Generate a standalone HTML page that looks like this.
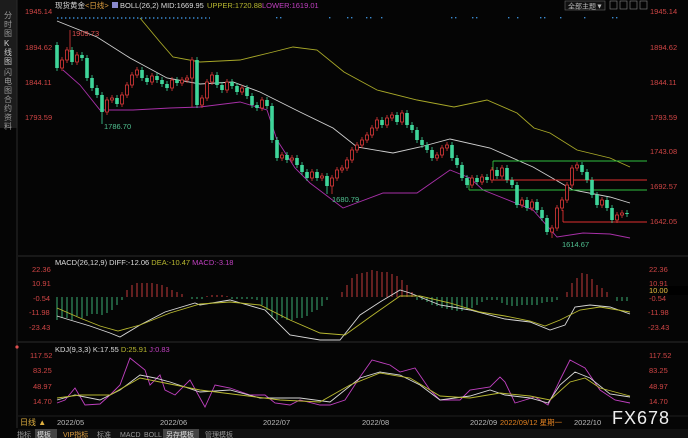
<!DOCTYPE html>
<html><head><meta charset="utf-8"><style>
body{margin:0;background:#000;width:688px;height:438px;overflow:hidden;font-family:"Liberation Sans","Noto Sans CJK SC",sans-serif}
svg{display:block}
</style></head><body>
<svg width="688" height="438" xmlns="http://www.w3.org/2000/svg" font-family="Liberation Sans, Noto Sans CJK SC, sans-serif">
<rect width="688" height="438" fill="#050505"/>
<rect x="0" y="0" width="17" height="128" fill="#1c1c1c"/>
<line x1="17" y1="0" x2="17" y2="428" stroke="#2a2a2a"/>
<g fill="#999" font-size="8">
<text x="4" y="18">分</text><text x="4" y="27">时</text><text x="4" y="36">图</text>
<text x="4" y="46" fill="#ccc">K</text><text x="4" y="55" fill="#ccc">线</text><text x="4" y="64" fill="#ccc">图</text>
<text x="4" y="75">闪</text><text x="4" y="84">电</text><text x="4" y="93">图</text>
<text x="4" y="102">合</text><text x="4" y="111">约</text><text x="4" y="120">资</text><text x="4" y="129">料</text>
</g>
<line x1="18" y1="256" x2="688" y2="256" stroke="#2a2a2a"/>
<line x1="18" y1="342" x2="688" y2="342" stroke="#2a2a2a"/>
<line x1="18" y1="416" x2="688" y2="416" stroke="#1e1e1e"/>
<text x="55" y="8" font-size="7.5" fill="#ddd">现货黄金<tspan fill="#e0a040">&lt;日线&gt;</tspan></text>
<rect x="112" y="2" width="6" height="6" fill="#8888cc"/>
<text x="120" y="8" font-size="7.5" fill="#ddd">BOLL(26,2) MID:1669.95</text>
<text x="207" y="8" font-size="7.5" fill="#b8b830">UPPER:1720.88</text>
<text x="262" y="8" font-size="7.5" fill="#c040c0">LOWER:1619.01</text>
<rect x="565" y="1" width="40" height="9" fill="#111" stroke="#666" stroke-width="0.6"/>
<text x="568" y="8.5" font-size="7" fill="#bbb">全部主题▼</text>
<g fill="none" stroke="#888" stroke-width="0.6"><rect x="610" y="1" width="7" height="8"/><rect x="620" y="1" width="7" height="8"/><rect x="630" y="1" width="7" height="8"/><rect x="640" y="1" width="7" height="8"/></g>
<g font-size="7.5" fill="#d04545">
<text x="25" y="14">1945.14</text><text x="25" y="50">1894.62</text><text x="25" y="85">1844.11</text><text x="25" y="120">1793.59</text>
<text x="650" y="14">1945.14</text><text x="650" y="50">1894.62</text><text x="650" y="85">1844.11</text><text x="650" y="120">1793.59</text><text x="650" y="154">1743.08</text><text x="650" y="189">1692.57</text><text x="650" y="224">1642.05</text>
<text x="32" y="272">22.36</text><text x="32" y="286">10.91</text><text x="33" y="301">-0.54</text><text x="29" y="315">-11.98</text><text x="29" y="330">-23.43</text>
<text x="649" y="272">22.36</text><text x="649" y="286">10.91</text><text x="649" y="301">-0.54</text><text x="648" y="315">-11.98</text><text x="648" y="330">-23.43</text>
<text x="30" y="358">117.52</text><text x="33" y="373">83.25</text><text x="33" y="389">48.97</text><text x="33" y="404">14.70</text>
<text x="649" y="358">117.52</text><text x="649" y="373">83.25</text><text x="649" y="389">48.97</text><text x="649" y="404">14.70</text>
</g>
<rect x="668" y="286" width="20" height="9" fill="#000"/>
<text x="649" y="293" font-size="7.5" fill="#e8c040">10.00</text>
<circle cx="17" cy="347" r="1.6" fill="#e05050"/>
<text x="55" y="265" font-size="7.5" fill="#ddd">MACD(26,12,9) DIFF:-12.06 <tspan fill="#b8b830">DEA:-10.47</tspan> <tspan fill="#c040c0">MACD:-3.18</tspan></text>
<text x="55" y="352" font-size="7.5" fill="#ddd">KDJ(9,3,3) K:17.55 <tspan fill="#b8b830">D:25.91</tspan> <tspan fill="#c040c0">J:0.83</tspan></text>
<!-- dots -->
<line x1="57" y1="18" x2="210" y2="18" stroke="#3a8ad0" stroke-width="1.4" stroke-dasharray="1.4 2.6"/>
<path fill="#3a8ad0" d="M276 17h1.4v1.4h-1.4zM280 17h1.4v1.4h-1.4zM329 17h1.4v1.4h-1.4zM347 17h1.4v1.4h-1.4zM351 17h1.4v1.4h-1.4zM366 17h1.4v1.4h-1.4zM370 17h1.4v1.4h-1.4zM381 17h1.4v1.4h-1.4zM451 17h1.4v1.4h-1.4zM455 17h1.4v1.4h-1.4zM472 17h1.4v1.4h-1.4zM476 17h1.4v1.4h-1.4zM508 17h1.4v1.4h-1.4zM517 17h1.4v1.4h-1.4zM540 17h1.4v1.4h-1.4zM544 17h1.4v1.4h-1.4zM560 17h1.4v1.4h-1.4zM584 17h1.4v1.4h-1.4zM612 17h1.4v1.4h-1.4zM616 17h1.4v1.4h-1.4z"/>
<!-- bands -->
<g fill="none" stroke-width="0.9">
<polyline stroke="#a8a828" points="140,18 160,42 173,57 200,62 240,60 273,52 293,47 317,50 344,72 377,90 417,100 454,107 487,100 517,113 534,128 550,133 577,150 610,158 630,167"/>
<polyline stroke="#d0d0d0" points="57,21 97,37 130,58 167,78 200,84 233,82 260,92 300,112 333,128 357,147 393,153 420,147 450,139 490,148 533,167 573,190 610,197 630,203"/>
<polyline stroke="#a830a8" points="63,70 80,85 100,110 133,110 170,108 200,107 240,102 267,110 277,140 295,168 310,183 343,208 383,193 417,193 450,170 470,178 483,190 533,210 557,237 583,233 610,234 630,238"/>
<line stroke="#30c040" x1="493" y1="161" x2="647" y2="161"/>
<line stroke="#30c040" x1="469" y1="190" x2="647" y2="190"/>
<line stroke="#30c040" x1="469" y1="190" x2="469" y2="180"/>
<line stroke="#30c040" x1="493" y1="161" x2="493" y2="180"/>
<line stroke="#e03030" x1="493" y1="180" x2="647" y2="180"/>
<line stroke="#e03030" x1="563" y1="222" x2="647" y2="222"/>
<line stroke="#e03030" x1="563" y1="222" x2="563" y2="210"/>
</g>
<!-- wicks -->
<g stroke-width="0.8" fill="none">
<path stroke="#3fd59a" d="M57 42v29M72 47v18M82 52v9M87 55v26M92 75v16M97 85v13M102 92v32M117 95v12M142 67v14M147 75v10M157 73v10M162 77v10M167 81v10M177 77v9M197 57v51M217 72v16M222 82v11M232 79v10M237 83v12M247 85v14M252 93v15M257 102v9M267 97v12M272 103v40M277 137v24M287 152v11M297 155v13M302 162v13M307 169v12M317 169v12M327 173v21M382 117v11M397 112v13M407 110v18M412 122v11M417 127v16M422 137v11M427 142v11M432 147v14M452 142v19M457 155v13M462 162v19M467 175v13M477 175v10M487 174v9M497 167v12M507 165v18M512 177v11M517 182v26M527 197v14M537 199v14M542 207v14M547 215v20M582 162v13M587 169v14M592 177v21M597 192v16M607 197v14M612 205v18M627 210v7"/>
<path stroke="#e03a3a" d="M62 57v14M67 47v16M70 30v22M77 52v13M107 97v18M112 95v8M122 92v15M127 82v16M132 72v16M137 67v11M152 73v12M172 77v14M182 77v9M187 75v8M192 57v50M202 95v13M207 79v22M212 72v13M227 79v14M242 85v10M262 97v14M282 152v9M292 155v8M312 169v12M322 173v8M332 175v19M337 167v14M342 165v8M347 157v14M352 147v16M357 142v11M362 137v11M367 132v11M372 125v13M377 117v14M387 115v13M392 112v9M402 110v15M437 152v9M442 145v13M447 142v9M472 175v13M482 174v11M492 167v16M502 165v14M522 197v11M532 199v12M552 225v13M557 205v26M562 197v14M567 182v21M572 165v23M577 162v9M602 197v11M617 212v11M622 210v8"/>
</g>
<path fill="#3fd59a" d="M55.2 45h3.6v23h-3.6zM70.2 50h3.6v12h-3.6zM80.2 55h3.6v3h-3.6zM85.2 58h3.6v20h-3.6zM90.2 78h3.6v10h-3.6zM95.2 88h3.6v7h-3.6zM100.2 95h3.6v17h-3.6zM115.2 98h3.6v6h-3.6zM140.2 70h3.6v8h-3.6zM145.2 78h3.6v4h-3.6zM155.2 76h3.6v4h-3.6zM160.2 80h3.6v4h-3.6zM165.2 84h3.6v4h-3.6zM175.2 80h3.6v3h-3.6zM195.2 60h3.6v45h-3.6zM215.2 75h3.6v10h-3.6zM220.2 85h3.6v5h-3.6zM230.2 82h3.6v4h-3.6zM235.2 86h3.6v6h-3.6zM245.2 88h3.6v8h-3.6zM250.2 96h3.6v9h-3.6zM255.2 105h3.6v3h-3.6zM265.2 100h3.6v6h-3.6zM270.2 106h3.6v34h-3.6zM275.2 140h3.6v18h-3.6zM285.2 155h3.6v5h-3.6zM295.2 158h3.6v7h-3.6zM300.2 165h3.6v7h-3.6zM305.2 172h3.6v6h-3.6zM315.2 172h3.6v6h-3.6zM325.2 176h3.6v10h-3.6zM380.2 120h3.6v5h-3.6zM395.2 115h3.6v7h-3.6zM405.2 113h3.6v12h-3.6zM410.2 125h3.6v5h-3.6zM415.2 130h3.6v10h-3.6zM420.2 140h3.6v5h-3.6zM425.2 145h3.6v5h-3.6zM430.2 150h3.6v8h-3.6zM450.2 145h3.6v13h-3.6zM455.2 158h3.6v7h-3.6zM460.2 165h3.6v13h-3.6zM465.2 178h3.6v7h-3.6zM475.2 178h3.6v4h-3.6zM485.2 177h3.6v3h-3.6zM495.2 170h3.6v6h-3.6zM505.2 168h3.6v12h-3.6zM510.2 180h3.6v5h-3.6zM515.2 185h3.6v20h-3.6zM525.2 200h3.6v8h-3.6zM535.2 202h3.6v8h-3.6zM540.2 210h3.6v8h-3.6zM545.2 218h3.6v14h-3.6zM580.2 165h3.6v7h-3.6zM585.2 172h3.6v8h-3.6zM590.2 180h3.6v15h-3.6zM595.2 195h3.6v10h-3.6zM605.2 200h3.6v8h-3.6zM610.2 208h3.6v12h-3.6zM625.2 213h3.6v1h-3.6z"/>
<path fill="#050505" stroke="#e03a3a" stroke-width="0.8" d="M60.5 60h3v8h-3zM65.5 50h3v10h-3zM75.5 55h3v7h-3zM105.5 100h3v12h-3zM110.5 98h3v2h-3zM120.5 95h3v9h-3zM125.5 85h3v10h-3zM130.5 75h3v10h-3zM135.5 70h3v5h-3zM150.5 76h3v6h-3zM170.5 80h3v8h-3zM180.5 80h3v3h-3zM185.5 78h3v2h-3zM190.5 60h3v18h-3zM200.5 98h3v7h-3zM205.5 82h3v16h-3zM210.5 75h3v7h-3zM225.5 82h3v8h-3zM240.5 88h3v4h-3zM260.5 100h3v8h-3zM280.5 155h3v3h-3zM290.5 158h3v2h-3zM310.5 172h3v6h-3zM320.5 176h3v2h-3zM330.5 178h3v8h-3zM335.5 170h3v8h-3zM340.5 168h3v2h-3zM345.5 160h3v8h-3zM350.5 150h3v10h-3zM355.5 145h3v5h-3zM360.5 140h3v5h-3zM365.5 135h3v5h-3zM370.5 128h3v7h-3zM375.5 120h3v8h-3zM385.5 118h3v7h-3zM390.5 115h3v3h-3zM400.5 113h3v9h-3zM435.5 155h3v3h-3zM440.5 148h3v7h-3zM445.5 145h3v3h-3zM470.5 178h3v7h-3zM480.5 177h3v5h-3zM490.5 170h3v10h-3zM500.5 168h3v8h-3zM520.5 200h3v5h-3zM530.5 202h3v6h-3zM550.5 228h3v4h-3zM555.5 208h3v20h-3zM560.5 200h3v8h-3zM565.5 185h3v15h-3zM570.5 168h3v17h-3zM575.5 165h3v3h-3zM600.5 200h3v5h-3zM615.5 215h3v5h-3zM620.5 213h3v2h-3z"/>
<g font-size="7.5">
<text x="72" y="36" fill="#e05050">1909.73</text>
<text x="104" y="129" fill="#50c090">1786.70</text>
<text x="332" y="202" fill="#50c090">1680.79</text>
<text x="562" y="247" fill="#50c090">1614.67</text>
</g>
<!-- MACD hist -->
<path stroke="#40c080" stroke-width="0.9" fill="none" d="M57 297V320M62 297V318M67 297V318M72 297V320M77 297V316M82 297V318M87 297V316M92 297V314M97 297V314M102 297V315M107 297V313M112 297V310M117 297V305M122 297V300M192 297V299M197 297V299M202 297V299M232 297V299M237 297V299M242 297V299M247 297V299M252 297V299M257 297V300M262 297V305M267 297V310M272 297V318M277 297V320M282 297V318M287 297V320M292 297V320M297 297V318M302 297V318M307 297V316M312 297V312M317 297V310M322 297V306M327 297V300M417 297V300M422 297V300M427 297V302M432 297V305M437 297V306M442 297V308M447 297V309M452 297V310M457 297V311M462 297V311M467 297V310M472 297V308M477 297V305M482 297V302M487 297V300M492 297V300M497 297V300M502 297V303M507 297V305M512 297V306M517 297V306M522 297V305M527 297V305M532 297V305M537 297V305M542 297V303M547 297V302M552 297V302M557 297V300M617 297V301M622 297V301M627 297V301"/>
<path stroke="#d84040" stroke-width="0.9" fill="none" d="M127 297V290M132 297V285M137 297V283M142 297V283M147 297V283M152 297V283M157 297V284M162 297V285M167 297V287M172 297V290M177 297V292M182 297V294M207 297V296M212 297V295M217 297V295M222 297V295M227 297V296M342 297V292M347 297V285M352 297V278M357 297V274M362 297V273M367 297V272M372 297V270M377 297V271M382 297V272M387 297V272M392 297V274M397 297V276M402 297V280M407 297V285M412 297V292M567 297V292M572 297V283M577 297V278M582 297V273M587 297V274M592 297V279M597 297V285M602 297V288M607 297V292"/>
<g fill="none" stroke-width="0.9">
<polyline stroke="#d8d8d8" points="57,316 70,320 90,326 110,333 120,337 140,325 165,312 195,303 200,305 230,300 265,310 290,335 320,340 340,340 360,315 380,302 400,290 410,293 440,305 470,310 505,319 530,322 550,330 565,325 575,307 590,305 610,307 630,314"/>
<polyline stroke="#b8b830" points="57,308 80,318 100,326 118,331 140,325 170,313 200,304 230,302 260,305 290,320 320,333 345,335 370,317 400,296 420,296 450,303 480,312 505,316 530,321 545,326 560,320 580,310 600,307 630,312"/>
<polyline stroke="#c040c0" points="57,403 65,400 75,388 85,405 100,404 110,395 120,385 130,358 145,370 150,385 160,375 165,390 175,395 190,380 200,398 205,407 215,385 230,388 250,395 265,395 275,403 290,405 300,400 320,405 330,405 345,400 360,377 372,360 390,365 400,372 415,368 430,390 440,400 460,400 470,390 490,387 500,377 505,382 515,403 535,397 548,405 560,380 570,360 585,368 600,390 615,400 630,403"/>
<polyline stroke="#d8d8d8" points="57,400 75,395 100,400 120,390 140,375 155,378 170,382 200,392 230,390 260,398 300,398 330,402 360,378 380,372 400,375 420,385 440,400 470,396 490,390 505,395 530,398 548,403 560,385 575,372 590,378 610,394 630,397"/>
<polyline stroke="#b8b830" points="57,398 80,395 110,395 140,378 160,382 200,390 240,395 280,400 320,402 350,385 380,373 410,378 440,396 470,398 500,393 530,396 550,400 570,382 585,378 600,388 630,396"/>
</g>
<g font-size="7.5" fill="#bbb">
<text x="57" y="425">2022/05</text><text x="160" y="425">2022/06</text><text x="263" y="425">2022/07</text><text x="362" y="425">2022/08</text>
<text x="470" y="425">2022/09</text><text x="574" y="425">2022/10</text>
<text x="500" y="425" fill="#e08020">2022/09/12 星期一</text>
</g>
<text x="20" y="425" font-size="8" fill="#e0b040">日线 ▲</text>
<text x="612" y="424" font-size="18" fill="#eee" letter-spacing="1">FX678</text>
<rect x="18" y="429" width="670" height="9" fill="#111"/>
<g font-size="7" fill="#999">
<text x="17" y="437">指标</text>
<rect x="35" y="429" width="22" height="9" fill="#444"/><text x="37" y="437" fill="#ddd">模板</text>
<text x="63" y="437" fill="#e0a040">VIP指标</text>
<text x="97" y="437">标准</text><text x="120" y="437">MACD</text><text x="144" y="437">BOLL</text>
<rect x="163" y="429" width="36" height="9" fill="#444"/><text x="166" y="437" fill="#ddd">另存模板</text>
<text x="205" y="437">管理模板</text>
</g>
</svg>
</body></html>
